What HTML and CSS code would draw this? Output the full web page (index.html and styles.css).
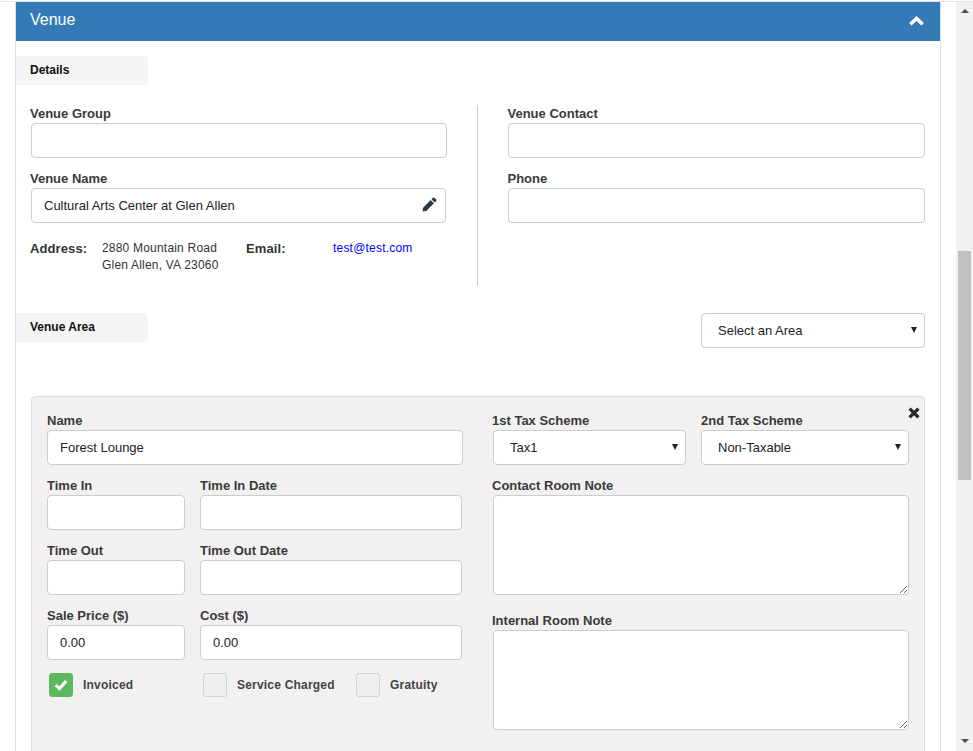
FILE: index.html
```html
<!DOCTYPE html>
<html lang="en">
<head>
    <meta charset="UTF-8">
    <title>Venue</title>
    <link rel="stylesheet" href="styles.css">
</head>
<body>
    <div class="page">
        <main class="panel">
            <header class="panel-head">
                <span>Venue</span>
                <svg class="chevron" width="15" height="10" viewBox="0 0 15 10"><path d="M1.4 8.2 7.5 2.4l6.1 5.8" fill="none" stroke="#fff" stroke-width="3.6"/></svg>
            </header>

            <div class="tab tab-details">Details</div>

            <section class="details">
                <div class="details-col">
                    <div class="field">
                        <label for="venueGroup">Venue Group</label>
                        <input type="text" id="venueGroup">
                    </div>
                    <div class="field">
                        <label for="venueName">Venue Name</label>
                        <div class="input-icon">
                            <input type="text" id="venueName" value="Cultural Arts Center at Glen Allen">
                            <svg class="pencil" width="15" height="15" viewBox="0 0 15 15"><path fill="#2c3a4d" d="M11 .8a1 1 0 0 1 1.4 0l1.8 1.8a1 1 0 0 1 0 1.4l-1.5 1.5-3.2-3.2zM8.7 3.1l3.2 3.2-7.6 7.6L.5 14.5l.6-3.8z"/></svg>
                        </div>
                    </div>
                    <div class="contact-info">
                        <b class="info-label">Address:</b>
                        <div class="info-value">2880 Mountain Road<br>Glen Allen, VA 23060</div>
                        <b class="info-label info-email">Email:</b>
                        <a class="info-link" href="#">test@test.com</a>
                    </div>
                </div>
                <div class="details-col details-right">
                    <div class="field">
                        <label for="venueContact">Venue Contact</label>
                        <input type="text" id="venueContact">
                    </div>
                    <div class="field">
                        <label for="phone">Phone</label>
                        <input type="text" id="phone">
                    </div>
                </div>
            </section>

            <div class="area-head">
                <div class="tab">Venue Area</div>
                <select class="area-select">
                    <option>Select an Area</option>
                </select>
            </div>

            <section class="area-card">
                <svg class="close" width="14" height="14" viewBox="0 0 14 14"><path d="M2.6 2.6l8.8 8.8M11.4 2.6l-8.8 8.8" fill="none" stroke="#2b2b2b" stroke-width="3.4"/></svg>
                <div class="area-col">
                    <div class="field">
                        <label for="roomName">Name</label>
                        <input type="text" id="roomName" value="Forest Lounge">
                    </div>
                    <div class="pair">
                        <div class="field">
                            <label for="timeIn">Time In</label>
                            <input type="text" id="timeIn">
                        </div>
                        <div class="field">
                            <label for="timeInDate">Time In Date</label>
                            <input type="text" id="timeInDate">
                        </div>
                    </div>
                    <div class="pair">
                        <div class="field">
                            <label for="timeOut">Time Out</label>
                            <input type="text" id="timeOut">
                        </div>
                        <div class="field">
                            <label for="timeOutDate">Time Out Date</label>
                            <input type="text" id="timeOutDate">
                        </div>
                    </div>
                    <div class="pair">
                        <div class="field">
                            <label for="salePrice">Sale Price ($)</label>
                            <input type="text" id="salePrice" value="0.00">
                        </div>
                        <div class="field">
                            <label for="cost">Cost ($)</label>
                            <input type="text" id="cost" value="0.00">
                        </div>
                    </div>
                    <div class="checks">
                        <div class="check check-invoiced">
                            <span class="box box-on">
                                <svg width="14" height="12" viewBox="0 0 14 12"><path d="M1.8 6.2l3.6 3.4 6.8-7.4" fill="none" stroke="#fff" stroke-width="3.2"/></svg>
                            </span>
                            Invoiced
                        </div>
                        <div class="check check-service"><span class="box"></span>Service Charged</div>
                        <div class="check"><span class="box"></span>Gratuity</div>
                    </div>
                </div>
                <div class="area-col area-right">
                    <div class="tax-row">
                        <div class="field">
                            <label for="tax1">1st Tax Scheme</label>
                            <select id="tax1"><option>Tax1</option></select>
                        </div>
                        <div class="field">
                            <label for="tax2">2nd Tax Scheme</label>
                            <select id="tax2"><option>Non-Taxable</option></select>
                        </div>
                    </div>
                    <div class="field">
                        <label for="contactNote">Contact Room Note</label>
                        <textarea id="contactNote"></textarea>
                    </div>
                    <div class="field field-note">
                        <label for="internalNote">Internal Room Note</label>
                        <textarea id="internalNote"></textarea>
                    </div>
                </div>
            </section>
        </main>

        <aside class="scrollbar">
            <span class="arrow-up"></span>
            <span class="thumb"></span>
            <span class="arrow-down"></span>
        </aside>
    </div>
</body>
</html>
```

FILE: styles.css
```css
html, body {
    margin: 0;
    height: 100%;
    overflow: hidden;
}

body {
    font-family: "Liberation Sans", Arial, sans-serif;
    font-size: 14px;
    color: #333;
    background: #fff;
}

.page {
    display: flex;
    height: 751px;
    overflow: hidden;
    box-sizing: border-box;
    border-top: 1px solid #e4e4e4;
    margin-top: 1px;
}

.panel {
    width: 924px;
    margin-left: 15px;
    border-left: 1px solid #ddd;
    border-right: 1px solid #ddd;
    flex: none;
    overflow: hidden;
}

.panel-head {
    height: 39px;
    background: #337ab7;
    color: #fff;
    font-size: 16px;
    display: flex;
    justify-content: space-between;
    padding: 0 16px 3px 14px;
    box-sizing: border-box;
    align-items: center;
}

.chevron {
    margin-top: 2px;
}

.tab {
    width: 118px;
    height: 29px;
    margin-left: -1px;
    padding-left: 15px;
    background: #f5f5f5;
    border-radius: 0 4px 4px 0;
    color: #111;
    font-size: 12px;
    font-weight: bold;
    line-height: 29px;
}

.tab-details {
    margin-top: 15px;
}

.details {
    display: flex;
    margin-top: 18px;
    height: 183px;
}

.details-col {
    width: 417px;
    margin-left: 14px;
    box-sizing: border-box;
}

.details-right {
    margin: 2px 0 0 30px;
    padding-left: 30px;
    width: 448px;
    border-left: 1px solid #ccc;
}

.details-right .field:first-child {
    margin-top: -2px;
}

.field {
    margin-bottom: 10px;
    min-width: 0;
}

.field label {
    display: block;
    height: 20px;
    line-height: 22px;
    font-size: 13px;
    font-weight: bold;
    color: #3a3a3a;
}

input, select, textarea {
    display: block;
    width: 100%;
    height: 35px;
    box-sizing: border-box;
    border: 1px solid #ccc;
    border-radius: 4px;
    background: #fff;
    padding: 0 12px;
    font-family: inherit;
    font-size: 13px;
    color: #222;
    margin: 0;
}

.details-col input {
    margin-left: 1px;
    width: 416px;
}

.details-right input {
    width: 417px;
    margin-left: 0;
}

.details-right label {
    margin-left: -0.5px;
}

textarea {
    height: 100px;
    padding: 6px 12px;
}

select {
    appearance: none;
    padding-left: 16px;
    background: #fff url("data:image/svg+xml,%3Csvg xmlns='http://www.w3.org/2000/svg' width='6' height='6'%3E%3Cpath d='M0 0h6L3 6z' fill='%23222'/%3E%3C/svg%3E") no-repeat right 7px top 13px;
}

.input-icon {
    position: relative;
    width: 416px;
}

.details-col .input-icon input {
    width: 415px;
}

.pencil {
    position: absolute;
    top: 9px;
    right: 9px;
}

.contact-info {
    display: flex;
    align-items: flex-start;
    margin-top: 17px;
}

.info-label {
    font-size: 13px;
    font-weight: bold;
    letter-spacing: 0.1px;
    line-height: 18px;
    width: 72px;
    flex: none;
}

.info-value {
    width: 144px;
    flex: none;
    font-size: 12px;
    letter-spacing: 0.2px;
    line-height: 17px;
}

.info-email {
    width: 87px;
}

.info-link {
    font-size: 12px;
    letter-spacing: 0.2px;
    line-height: 17px;
    color: #00f;
    text-decoration: none;
}

.area-head {
    display: flex;
    justify-content: space-between;
    margin-top: 27px;
}

.area-select {
    width: 224px;
    margin-right: 15px;
}

.area-card {
    position: relative;
    display: flex;
    width: 894px;
    height: 500px;
    margin: 48px 0 0 15px;
    padding-top: 13px;
    box-sizing: border-box;
    background: #f2f0f1;
    border: 1px solid #ddd;
    border-radius: 4px;
}

.area-col {
    width: 416px;
    margin-left: 15px;
    flex: none;
}

.area-right {
    width: 417px;
    margin-left: 29px;
}

.area-right input, .area-right select, .area-right textarea {
    margin-left: 1px;
    width: 416px;
}

.pair {
    display: grid;
    grid-template-columns: 138px 262px;
    gap: 15px;
}

.tax-row {
    display: grid;
    grid-template-columns: 194px 208px;
    gap: 15px;
}

.tax-row .field:first-child select {
    width: 193px;
}

.tax-row .field:last-child select {
    width: 208px;
    margin-left: 0;
}

.field-note {
    margin-top: 15px;
}

.checks {
    display: flex;
    align-items: center;
    margin: 3px 0 0 2px;
    font-size: 12px;
    font-weight: bold;
    letter-spacing: 0.2px;
    color: #444;
}

.check {
    display: flex;
    align-items: center;
    gap: 10px;
}

.check-invoiced {
    width: 154px;
}

.check-service {
    width: 153px;
}

.box {
    display: flex;
    align-items: center;
    justify-content: center;
    width: 24px;
    height: 24px;
    box-sizing: border-box;
    border: 1px solid #d2d2d2;
    border-radius: 3px;
    background: #eceef0;
}

.box-on {
    background: #5cb85c;
    border-color: #5cb85c;
}

.close {
    position: absolute;
    top: 9px;
    right: 3px;
}

.scrollbar {
    display: flex;
    flex-direction: column;
    align-items: center;
    width: 17px;
    height: 751px;
    margin-left: 15px;
    margin-top: -2px;
    background: #f1f1f1;
    flex: none;
}

.arrow-up {
    margin-top: 9px;
    border: 4px solid transparent;
    border-top: 0;
    border-bottom: 4px solid #505050;
}

.thumb {
    width: 13px;
    height: 229px;
    margin-top: 238px;
    background: #c1c1c1;
}

.arrow-down {
    margin-top: 259px;
    border: 4px solid transparent;
    border-bottom: 0;
    border-top: 4px solid #505050;
}
```
